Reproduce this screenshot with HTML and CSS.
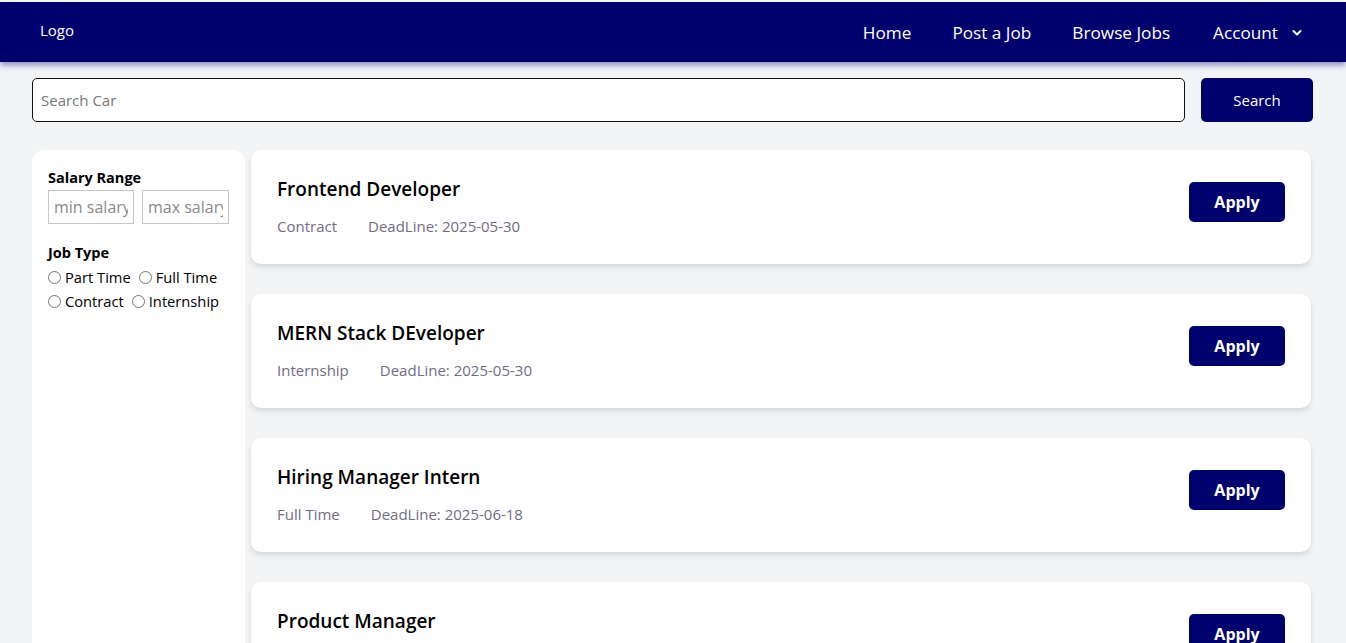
FILE: index.html
```html
<!DOCTYPE html>
<html lang="en">
<head>
<meta charset="utf-8">
<title>Jobs</title>
<link rel="stylesheet" href="styles.css">
</head>
<body>
<nav class="navbar">
  <div class="logo">Logo</div>
  <ul class="nav-links">
    <li>Home</li>
    <li>Post a Job</li>
    <li>Browse Jobs</li>
    <li class="account">Account
      <svg class="chev" width="10" height="8" viewBox="0 0 10 8"><path d="M1.5 2 L5 5.5 L8.5 2" fill="none" stroke="#fff" stroke-width="2" stroke-linecap="round" stroke-linejoin="round"/></svg>
    </li>
  </ul>
</nav>

<div class="page">
  <div class="search-row">
    <input class="search-input" type="text" placeholder="Search Car">
    <button class="search-btn">Search</button>
  </div>

  <div class="main">
    <aside class="sidebar">
      <div class="filter-title">Salary Range</div>
      <div class="salary">
        <input class="salary-input" type="text" placeholder="min salary">
        <input class="salary-input" type="text" placeholder="max salary">
      </div>
      <div class="filter-title jt">Job Type</div>
      <div class="radios">
        <label class="radio"><span class="circle"></span>Part Time</label>
        <label class="radio"><span class="circle"></span>Full Time</label>
        <label class="radio"><span class="circle"></span>Contract</label>
        <label class="radio"><span class="circle"></span>Internship</label>
      </div>
    </aside>

    <section class="jobs">
      <div class="card">
        <div class="info">
          <div class="title">Frontend Developer</div>
          <div class="meta"><span>Contract</span><span>DeadLine: 2025-05-30</span></div>
        </div>
        <button class="apply">Apply</button>
      </div>
      <div class="card">
        <div class="info">
          <div class="title">MERN Stack DEveloper</div>
          <div class="meta"><span>Internship</span><span>DeadLine: 2025-05-30</span></div>
        </div>
        <button class="apply">Apply</button>
      </div>
      <div class="card">
        <div class="info">
          <div class="title">Hiring Manager Intern</div>
          <div class="meta"><span>Full Time</span><span>DeadLine: 2025-06-18</span></div>
        </div>
        <button class="apply">Apply</button>
      </div>
      <div class="card">
        <div class="info">
          <div class="title">Product Manager</div>
          <div class="meta"><span>Full Time</span><span>DeadLine: 2025-06-30</span></div>
        </div>
        <button class="apply">Apply</button>
      </div>
    </section>
  </div>
</div>
</body>
</html>
```

FILE: styles.css
```css
* { box-sizing: border-box; }
html, body { margin: 0; padding: 0; }
html { background: #fff; }
body {
  background: #f3f4f6;
  font-family: "Open Sans", "Noto Sans", sans-serif;
  color: #000;
  padding-top: 2px;
  background-clip: content-box;
}

.navbar {
  height: 60px;
  background: #01016e;
  display: flex;
  align-items: center;
  justify-content: space-between;
  padding: 0 44px 0 40px;
  box-shadow: 0 3px 6px rgba(10, 10, 120, 0.45);
  position: relative;
  z-index: 1;
}
.logo {
  color: #fff;
  font-size: 15px;
  font-weight: 500;
  margin-top: -5px;
}
.nav-links {
  list-style: none;
  margin: 0;
  padding: 0;
  display: flex;
  gap: 41px;
  color: #fff;
  font-size: 17.2px;
}
.account { display: flex; align-items: center; gap: 14px; margin-left: 2px; }
.chev { margin-top: 1px; }

.page { padding: 16px 33px 0 32px; }

.search-row { display: flex; gap: 16px; height: 44px; }
.search-input {
  flex: 1;
  height: 44px;
  border: 1px solid #111;
  border-radius: 5px;
  padding: 0 8px;
  font-family: inherit;
  font-size: 15px;
  background: #fff;
  outline: none;
}
.search-input::placeholder { color: #777; }
.search-btn {
  width: 112px;
  height: 44px;
  background: #01016e;
  color: #fff;
  border: none;
  border-radius: 5px;
  font-family: inherit;
  font-size: 15px;
}

.main { display: flex; gap: 6px; margin-top: 28px; align-items: stretch; }

.sidebar {
  width: 213px;
  flex: none;
  background: #fff;
  border-radius: 12px 12px 0 0;
  padding: 19px 14px 16px 16px;
  min-height: 600px;
}
.filter-title { font-size: 14.5px; font-weight: 700; line-height: 18px; }
.filter-title.jt { margin-top: 20px; }
.salary { display: flex; gap: 8px; margin-top: 3px; }
.salary-input {
  width: 86px;
  height: 34px;
  border: 1px solid #c8c8c8;
  padding: 0 5px;
  font-family: inherit;
  font-size: 16px;
  background: #fff;
  outline: none;
}
.salary-input + .salary-input { width: 87px; }
.salary-input::placeholder { color: #8a8a8a; }
.radios { display: flex; flex-wrap: wrap; column-gap: 8px; font-size: 14.7px; line-height: 24px; margin-top: 3px; }
.radio { display: inline-flex; align-items: center; gap: 4px; }
.circle {
  width: 13px; height: 13px;
  border: 1px solid #767676;
  border-radius: 50%;
  background: #fff;
  display: inline-block;
}

.jobs { flex: 1; display: flex; flex-direction: column; gap: 30px; padding-right: 2px; }
.card {
  background: #fff;
  border-radius: 10px;
  height: 114px;
  padding: 26px 26px 0 26px;
  display: flex;
  justify-content: space-between;
  align-items: flex-start;
  box-shadow: 0 4px 6px rgba(0, 0, 0, 0.08), 0 2px 4px rgba(0, 0, 0, 0.05);
}
.title { font-size: 19px; font-weight: 600; line-height: 26px; }
.meta { margin-top: 13px; font-size: 15px; line-height: 22px; color: #736c85; display: flex; gap: 31px; }
.apply {
  margin-top: 6px;
  width: 96px;
  height: 40px;
  background: #01016e;
  color: #fff;
  border: none;
  border-radius: 5px;
  font-family: inherit;
  font-size: 16px;
  font-weight: 700;
}
```
